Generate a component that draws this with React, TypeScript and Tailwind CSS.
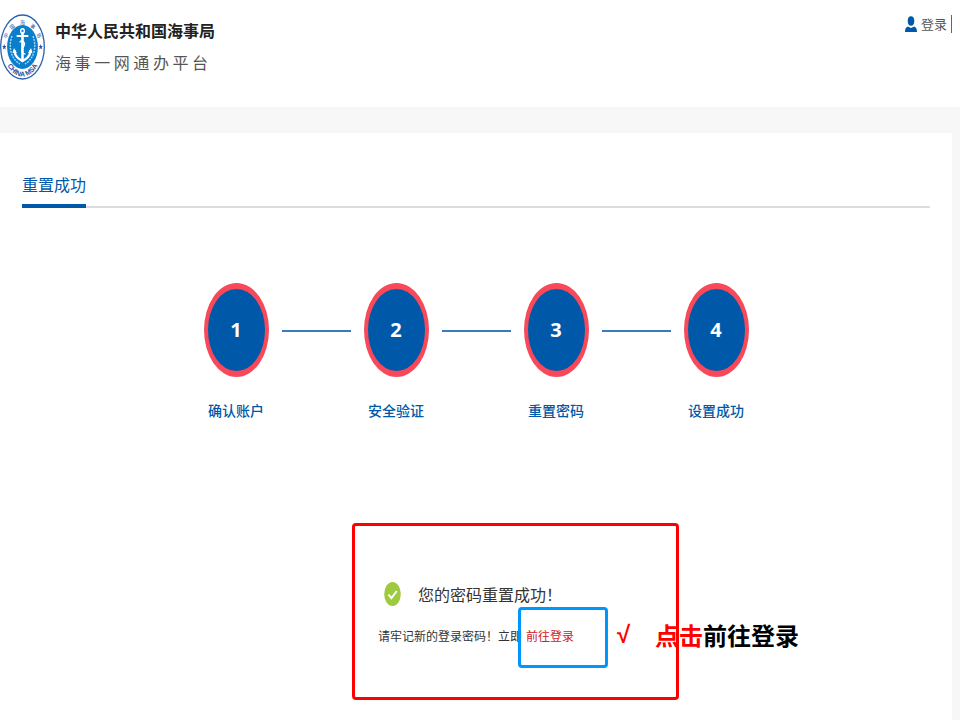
const steps = ["确认账户", "安全验证", "重置密码", "设置成功"];

function Emblem() {
  return (
    <svg viewBox="0 0 45 66" className="h-[66px] w-[45px] shrink-0" role="img" aria-label="中国海事局">
      <defs>
        <path id="emblem-top" d="M5.5 38 A17.2 24 0 1 1 39.5 38" />
        <path id="emblem-bottom" d="M3 33 A19.5 29.5 0 0 0 42 33" />
      </defs>
      <ellipse cx="22.5" cy="33" rx="21.8" ry="32" fill="#fff" stroke="#2a62ae" strokeWidth="1.3" />
      <ellipse cx="22.5" cy="33" rx="15.4" ry="22" fill="#0a7dcb" />
      <g fill="none" stroke="#a9d8f4" strokeWidth="1.4" strokeDasharray="2 1">
        <path d="M12 22 C8 33 11 45 20 50" />
        <path d="M33 22 C37 33 34 45 25 50" />
      </g>
      <g fill="none" stroke="#fff" strokeLinecap="round">
        <ellipse cx="22.5" cy="17" rx="1.8" ry="2.2" strokeWidth="1.4" />
        <path d="M22.5 19 V46" strokeWidth="2.6" />
        <path d="M17.5 22 H27.5" strokeWidth="2.2" />
        <path d="M14.5 37 C15 43 19 45 22.5 47 C26 45 30 43 30.5 37" strokeWidth="2.4" />
        <path d="M20 28 C21 25 26 28 24 32 C21 35 20 38 25 40" strokeWidth="1.3" />
      </g>
      <path d="M12.5 39 L14 34 L17 39 Z M28 39 L31 34 L32.5 39 Z" fill="#fff" />
      <path
        d="M4.3 30 L4.9 32 H6.5 L5.2 33.3 L5.8 35.5 L4.3 34.2 L2.8 35.5 L3.4 33.3 L2.1 32 H3.7 Z M40.7 30 L41.3 32 H42.9 L41.6 33.3 L42.2 35.5 L40.7 34.2 L39.2 35.5 L39.8 33.3 L38.5 32 H40.1 Z"
        fill="#234f9f"
      />
      <g fill="#234f9f" textAnchor="middle">
        <text className="font-['Noto_Sans_CJK_SC',sans-serif] text-[5px]">
          <textPath href="#emblem-top" startOffset="50%">中　国　海　事　局</textPath>
        </text>
        <text className="font-['Liberation_Sans',sans-serif] text-[7px] font-bold">
          <textPath href="#emblem-bottom" startOffset="50%">CHINA MSA</textPath>
        </text>
      </g>
    </svg>
  );
}

function UserIcon() {
  return (
    <svg viewBox="0 0 12 17" className="h-[17px] w-3" aria-hidden="true" fill="#0059a8">
      <ellipse cx="6" cy="5" rx="3.3" ry="4.8" />
      <path d="M2.8 10.4 L6 12 L9.2 10.4 C11 11 12 12.5 12 16 H0 C0 12.5 1 11 2.8 10.4 Z" />
    </svg>
  );
}

export default function App() {
  return (
    <div className="flex min-h-screen flex-col bg-[#f7f7f7] font-['Noto_Sans_CJK_SC',sans-serif] text-[#333]">
      <header className="flex h-[107px] items-start justify-between bg-white pr-2">
        <div className="flex gap-2.5 pt-3.5">
          <Emblem />
          <div className="pt-1">
            <h1 className="text-base leading-6 font-bold text-[#222]">中华人民共和国海事局</h1>
            <p className="mt-2 text-base leading-6 text-[#555]">海 事 一 网 通 办 平 台</p>
          </div>
        </div>
        <nav className="flex items-center gap-1 pt-3 text-[13px] leading-6 text-[#555]">
          <UserIcon />
          <a href="#login">登录</a>
          <span className="h-[18px] w-px bg-[#666]" />
        </nav>
      </header>

      <main className="mt-[26px] mr-2 flex-1 bg-white pt-[39px]">
        <div className="mr-[22px] ml-[22px] flex border-b-2 border-[#dcdcdc]">
          <h2 className="-mb-0.5 border-b-4 border-[#0059a8] pb-2 text-base leading-6 text-[#0059a8]">重置成功</h2>
        </div>

        <ol className="mt-[75px] flex justify-center">
          {steps.map((label, i) => (
            <li key={label} className="flex">
              {i > 0 && <span className="mx-[13px] mt-[47px] h-0.5 w-[69px] bg-[#3a7bba]" />}
              <div className="flex w-[65px] flex-col items-center">
                <span className="flex h-[94px] w-[65px] items-center justify-center rounded-[50%] border-x-4 border-y-6 border-[#f8485a] bg-[#0059a8] font-['Open_Sans',sans-serif] text-xl font-bold text-white">
                  {i + 1}
                </span>
                <span className="mt-[21px] text-sm leading-6 font-medium whitespace-nowrap text-[#0059a8]">{label}</span>
              </div>
            </li>
          ))}
        </ol>

        <section className="relative mx-auto mt-[160px] w-[196px]">
          <div className="flex items-center pl-1.5">
            <svg viewBox="0 0 17 24" className="h-6 w-[17px]" aria-hidden="true">
              <ellipse cx="8.5" cy="12" rx="8.3" ry="12" fill="#9dca3f" />
              <path d="M4.5 12.5 L7.4 16.2 L12.8 9" fill="none" stroke="#fff" strokeWidth="2" />
            </svg>
            <p className="ml-[17px] text-base leading-6 whitespace-nowrap">您的密码重置成功！</p>
          </div>
          <p className="mt-[18px] flex text-xs leading-6 whitespace-nowrap">
            请牢记新的登录密码！立即
            <a href="#login" className="ml-1 text-[#d0202b]">前往登录</a>
          </p>

          <div className="pointer-events-none absolute -top-[59px] -left-[26px] h-[177px] w-[327px] rounded-sm border-3 border-[#ff0000]" />
          <div className="pointer-events-none absolute top-[25px] left-[140px] h-[61px] w-[90px] rounded-sm border-3 border-[#0096ff]" />
          <p className="absolute top-[35px] left-[239px] flex items-center text-2xl leading-9 font-bold whitespace-nowrap text-black">
            <span className="w-[38px] font-['Liberation_Sans',sans-serif] text-[#ff0000]">√</span>
            <span className="text-[#ff0000]">点击</span>前往登录
          </p>
        </section>
      </main>
    </div>
  );
}
